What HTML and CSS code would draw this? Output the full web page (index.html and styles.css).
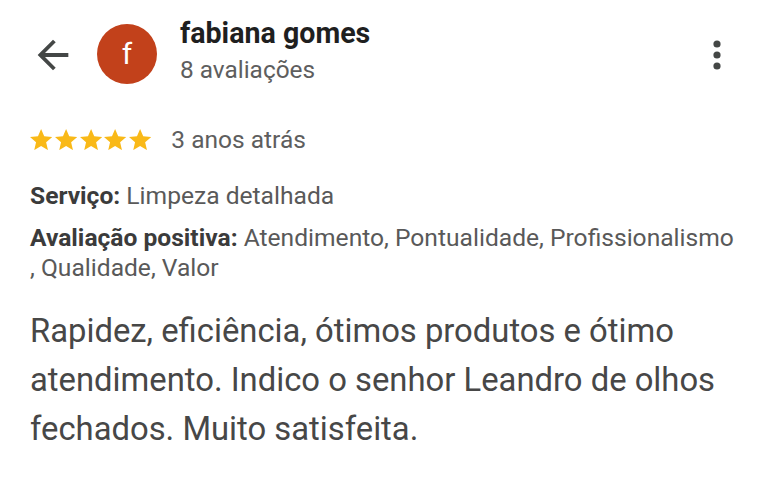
FILE: index.html
```html
<!DOCTYPE html>
<html lang="pt-BR">
<head>
<meta charset="utf-8">
<title>fabiana gomes</title>
<link rel="stylesheet" href="styles.css">
</head>
<body>
<main class="review">
  <header class="header">
    <svg class="back" viewBox="0 0 24 24" width="46" height="46" aria-label="Voltar">
      <path d="M20 11H7.83l5.59-5.59L12 4l-8 8 8 8 1.41-1.41L7.83 13H20v-2z" fill="#444746"/>
    </svg>
    <div class="avatar">f</div>
    <div class="who">
      <div class="name">fabiana gomes</div>
      <div class="count">8 avaliações</div>
    </div>
    <svg class="more" viewBox="0 0 8 30" width="8" height="30" aria-label="Mais opções">
      <circle cx="4" cy="4" r="3.6" fill="#444746"/>
      <circle cx="4" cy="15" r="3.6" fill="#444746"/>
      <circle cx="4" cy="26" r="3.6" fill="#444746"/>
    </svg>
  </header>

  <div class="rating">
    <div class="stars">
      <svg class="star" viewBox="2 2 20 19"><path d="M12 17.27L18.18 21l-1.64-7.03L22 9.24l-7.19-.61L12 2 9.19 8.63 2 9.24l5.46 4.73L5.82 21z"/></svg>
      <svg class="star" viewBox="2 2 20 19"><path d="M12 17.27L18.18 21l-1.64-7.03L22 9.24l-7.19-.61L12 2 9.19 8.63 2 9.24l5.46 4.73L5.82 21z"/></svg>
      <svg class="star" viewBox="2 2 20 19"><path d="M12 17.27L18.18 21l-1.64-7.03L22 9.24l-7.19-.61L12 2 9.19 8.63 2 9.24l5.46 4.73L5.82 21z"/></svg>
      <svg class="star" viewBox="2 2 20 19"><path d="M12 17.27L18.18 21l-1.64-7.03L22 9.24l-7.19-.61L12 2 9.19 8.63 2 9.24l5.46 4.73L5.82 21z"/></svg>
      <svg class="star" viewBox="2 2 20 19"><path d="M12 17.27L18.18 21l-1.64-7.03L22 9.24l-7.19-.61L12 2 9.19 8.63 2 9.24l5.46 4.73L5.82 21z"/></svg>
    </div>
    <span class="when">3 anos atrás</span>
  </div>

  <div class="details">
    <p class="detail"><b>Serviço:</b> Limpeza detalhada</p>
    <p class="detail"><span class="nowrap"><b>Avaliação positiva:</b> Atendimento, Pontualidade, Profissionalismo</span><br>, Qualidade, Valor</p>
  </div>

  <p class="text">Rapidez, eficiência, ótimos produtos e ótimo atendimento. Indico o senhor Leandro de olhos fechados. Muito satisfeita.</p>
</main>
</body>
</html>
```

FILE: styles.css
```css
html, body {
  margin: 0;
  padding: 0;
  background: #ffffff;
}

body {
  font-family: Roboto, "Noto Sans", "Liberation Sans", sans-serif;
  color: #474747;
  width: 768px;
  height: 491px;
  overflow: hidden;
}

.review {
  padding: 0 30px;
}

.header {
  display: flex;
  align-items: flex-start;
}

.back {
  display: block;
  margin-top: 32px;
  flex: none;
}

.avatar {
  flex: none;
  width: 60px;
  height: 60px;
  margin-top: 24px;
  margin-left: 21px;
  border-radius: 50%;
  background: #c2411b;
  color: #ffffff;
  font-size: 30px;
  line-height: 60px;
  text-align: center;
}

.who {
  margin-top: 17px;
  margin-left: 23px;
}

.name {
  font-size: 28.6px;
  font-weight: 700;
  line-height: 32px;
  color: #1f1f1f;
}

.count {
  margin-top: 6px;
  font-size: 24.4px;
  line-height: 30px;
  color: #5e5e5e;
}

.more {
  display: block;
  flex: none;
  margin-left: auto;
  margin-right: 17px;
  margin-top: 40px;
}

.rating {
  display: flex;
  align-items: flex-start;
  margin-top: 40px;
}

.stars {
  display: flex;
  gap: 2.6px;
  margin-top: 4px;
}

.star {
  display: block;
  width: 22.2px;
  height: 21.1px;
  fill: #f9b918;
}

.when {
  margin-left: 20px;
  font-size: 24.5px;
  line-height: 30px;
  color: #5e5e5e;
}

.details {
  display: flex;
  flex-direction: column;
  gap: 12px;
  margin-top: 26px;
}

.detail {
  margin: 0;
  font-size: 24.6px;
  line-height: 30px;
  color: #595959;
}

.detail b {
  font-weight: 700;
  color: #3b3b3b;
}

.nowrap {
  white-space: nowrap;
}

.text {
  margin: 24px 0 0;
  font-size: 32.8px;
  line-height: 49px;
  color: #474747;
}
```
